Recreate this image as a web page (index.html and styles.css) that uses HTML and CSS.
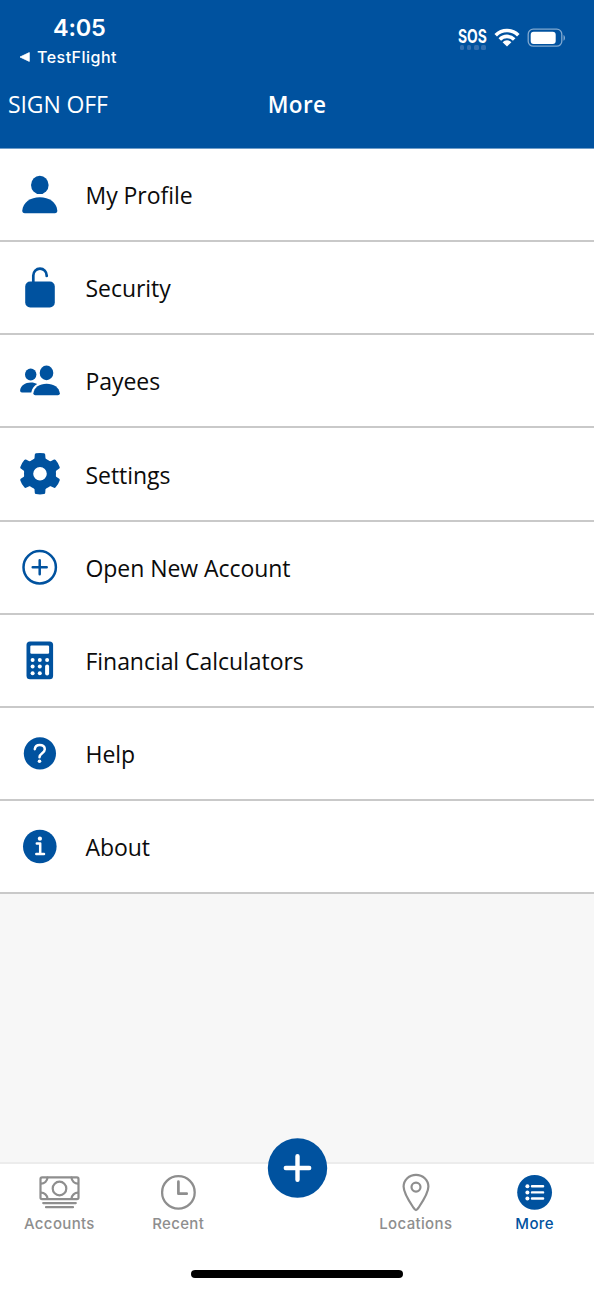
FILE: index.html
```
<!DOCTYPE html>
<html lang="en">
<head>
<meta charset="utf-8">
<title>More</title>
<link rel="stylesheet" href="styles.css">
</head>
<body>
<div class="screen">
  <header class="header">
    <div class="status">
      <div class="status-left">
        <div class="clock">4:05</div>
        <div class="back"><svg class="back-arrow" viewBox="0 0 11 10"><path d="M1 5 10.3.6v8.8z" fill="#fff" stroke="#fff" stroke-width=".8" stroke-linejoin="round"/></svg><span>TestFlight</span></div>
      </div>
      <div class="status-right">
        <div class="sos"><span class="sos-text">SOS</span><span class="dots"><i></i><i></i><i></i><i></i></span></div>
        <svg class="wifi" viewBox="0 0 26 20"><g fill="none" stroke="#fff" stroke-width="3.6"><path d="M1.7 8.2a16 16 0 0 1 22.6 0"/><path d="M5.8 12.4a10.2 10.2 0 0 1 14.4 0"/></g><path d="M8.6 15.2a6.2 6.2 0 0 1 8.8 0L13 19.6z" fill="#fff"/></svg>
        <svg class="battery" viewBox="0 0 39 20"><rect x="1.2" y="1.2" width="33.6" height="17" rx="5" fill="none" stroke="#80a9d1" stroke-width="1.3"/><rect x="3.700" y="3.700" width="25" height="12.2" rx="3" fill="#fff"/><path d="M36.500 7c2 .8 2 5 0 5.8z" fill="#80a9d1"/></svg>
      </div>
    </div>
    <div class="nav"><span class="sign-off">SIGN OFF</span><h1 class="title">More</h1><span></span></div>
  </header>
  <main class="menu">
    <div class="row"><svg class="icon" viewBox="0 0 80 93"><ellipse cx="39.8" cy="36.9" rx="8.8" ry="9.2"/><path d="M24.8 65.2q-2.6 0-2.5-2.6C23 54 30.5 49.2 39.8 49.2S56.600 54 57.300 62.600q.1 2.600-2.500 2.600z"/></svg><span class="label">My Profile</span></div>
    <div class="row"><svg class="icon" viewBox="0 0 80 93"><rect x="25.200" y="40.500" width="29.600" height="26" rx="5"/><path class="line" stroke-width="2.700" d="M33.300 42v-7.400a6.700 7 0 0 1 13.400 0v.4"/></svg><span class="label">Security</span></div>
    <div class="row"><svg class="icon" viewBox="0 0 80 93"><ellipse cx="30.700" cy="40.400" rx="5.700" ry="6"/><ellipse cx="46.500" cy="38.900" rx="6.800" ry="7.300"/><path d="M22 58.500q-2 0-1.900-1.900c.5-5.200 5-8.200 10.800-8.200 2.700 0 4.700.6 6.300 1.700-3.100 1.900-5.300 4.700-5.900 8.400z"/><path d="M35.300 61.200q-2 0-1.900-2c.7-5.700 6-9.500 13.200-9.500s12.500 3.800 13.200 9.500q.1 2-1.900 2z"/></svg><span class="label">Payees</span></div>
    <div class="row"><svg class="icon" viewBox="0 0 80 93"><g transform="translate(40 46.700)"><circle r="11.400" fill="none" stroke="#00529f" stroke-width="9.200"/><path id="tooth" d="M-6.800-13-5.500-15.500-5.200-19.200q.1-1 1.200-1.200Q0-21.200 4-20.400 5.100-20.200 5.200-19.200L5.500-15.500 6.800-13z"/><use href="#tooth" transform="rotate(60)"/><use href="#tooth" transform="rotate(120)"/><use href="#tooth" transform="rotate(180)"/><use href="#tooth" transform="rotate(240)"/><use href="#tooth" transform="rotate(300)"/></g></svg><span class="label">Settings</span></div>
    <div class="row"><svg class="icon" viewBox="0 0 80 93"><circle class="line" cx="39.700" cy="46.300" r="16.200" stroke-width="2.500"/><path class="line" stroke-width="2.500" d="M32.700 46.300h14M39.700 39.300v14"/></svg><span class="label">Open New Account</span></div>
    <div class="row"><svg class="icon" viewBox="0 0 80 93"><rect x="26.500" y="27.600" width="26.600" height="37.700" rx="3.500"/><g fill="#fff"><rect x="30.300" y="31.500" width="18.800" height="8.200" rx="1.200"/><circle cx="32.600" cy="46" r="2"/><circle cx="39.800" cy="46" r="2"/><circle cx="47.100" cy="46" r="2"/><circle cx="32.600" cy="52.600" r="2"/><circle cx="39.800" cy="52.600" r="2"/><circle cx="32.600" cy="59.200" r="2"/><circle cx="39.800" cy="59.200" r="2"/><rect x="45.100" y="50.600" width="4" height="10.800" rx="2"/></g></svg><span class="label">Financial Calculators</span></div>
    <div class="row"><svg class="icon" viewBox="0 0 80 93"><circle cx="39.900" cy="46.400" r="16.100"/><path class="mark" d="M34.800 42.200c.3-2.700 2.300-4.300 4.900-4.300 3 0 5.100 1.700 5.100 4.300 0 4-5.300 4-5.300 8"/><circle cx="39.500" cy="54.300" r="1.800" fill="#fff"/></svg><span class="label">Help</span></div>
    <div class="row"><svg class="icon" viewBox="0 0 80 93"><circle cx="39.800" cy="46.500" r="16.800"/><path class="mark" d="M36.800 43.500h3.400v10.300M36.300 54h7.700"/><circle cx="39.900" cy="38.700" r="2.100" fill="#fff"/></svg><span class="label">About</span></div>
  </main>
  <footer class="footer">
    <nav class="tabs">
      <div class="tab"><svg class="tab-icon" viewBox="0 0 42 42"><g class="gray" stroke-width="2.200"><rect x="2.500" y="5.400" width="38" height="21.700" rx="1.600"/><circle cx="21.500" cy="16.500" r="6.800"/><path d="M9.500 5.700a6.500 6.500 0 0 1-6.500 6M33.500 5.700a6.500 6.500 0 0 0 6.500 6M9.500 26.700a6.500 6.500 0 0 0-6.500-6M33.500 26.700a6.500 6.500 0 0 1 6.500-6M5.200 31.100h32.600M8 35.200h27"/></g></svg><span>Accounts</span></div>
      <div class="tab"><svg class="tab-icon" viewBox="0 0 42 42"><g class="gray" stroke-width="2.300"><circle cx="21.400" cy="20.400" r="16.300"/><path stroke-width="2.700" d="M21.400 9.700v12h8.300"/></g></svg><span>Recent</span></div>
      <div class="tab"><svg class="add" viewBox="0 0 60 60"><circle cx="30.500" cy="30" r="29.700"/><path d="M18.800 30h23.400M30.500 18.300v23.400" stroke="#fff" stroke-width="4.400" stroke-linecap="round"/></svg></div>
      <div class="tab"><svg class="tab-icon" viewBox="0 0 42 42"><g class="gray" stroke-width="2.200"><path d="M21 38.100c-1.200 0-2-1.500-3-3.100C14 29.100 8.600 20.400 8.600 14.600a12.400 11.800 0 0 1 24.800 0c0 5.800-5.400 14.500-9.400 20.400-1 1.600-1.800 3.100-3 3.100z"/><circle cx="21" cy="15.100" r="4.500"/></g></svg><span>Locations</span></div>
      <div class="tab active"><svg class="tab-icon" viewBox="0 0 42 42"><circle cx="20.600" cy="20.400" r="17.400"/><g fill="none" stroke="#fff" stroke-width="2.400" stroke-linecap="round"><path d="M18 14.300h11.100M18 20.400h11.100M18 26.500h11.100"/></g><g fill="#fff"><circle cx="13.400" cy="14.300" r="2"/><circle cx="13.400" cy="20.400" r="2"/><circle cx="13.400" cy="26.500" r="2"/></g></svg><span>More</span></div>
    </nav>
    <div class="home-bar"></div>
  </footer>
</div>
</body>
</html>
```
FILE: styles.css
```
* { box-sizing: border-box; }
body { margin: 0; font-family: "Open Sans", sans-serif; color: #0b0b0b; }
svg { display: block; fill: #00529f; }
.screen { width: 594px; height: 1290px; display: flex; flex-direction: column; background: #f7f7f7; overflow: hidden; }
.header { height: 149px; background: #00529f; border-bottom: 1px solid #6f9dc9; color: #fff; flex: none; }
.status { height: 76px; display: flex; justify-content: space-between; font-family: Inter, sans-serif; }
.status-left { padding: 13px 0 0 19px; }
.clock { font-size: 23.500px; font-weight: 600; line-height: 29px; padding-left: 34px; letter-spacing: -.2px; }
.back { display: flex; align-items: center; gap: 7px; height: 30px; font-size: 16px; font-weight: 500; letter-spacing: .48px; }
.back-arrow { width: 11px; height: 10px; }
.status-right { display: flex; padding: 27px 28px 0 0; }
.sos { width: 28px; height: 24px; margin-right: 8px; }
.sos-text { display: block; width: 37px; font-size: 18.500px; line-height: 18px; font-weight: 700; transform: scaleX(.75); transform-origin: 0 0; }
.dots { display: flex; gap: 2.500px; padding-left: 1.800px; }
.dots i { flex: none; width: 4.600px; height: 4.600px; border-radius: 1.500px; background: #336fb0; }
.wifi { width: 26px; height: 20px; margin-right: 7px; }
.battery { width: 39px; height: 20px; margin-top: 1px; }
.nav { display: grid; grid-template-columns: 1fr auto 1fr; align-items: center; height: 56px; padding: 0 8px; }
.sign-off { font-size: 23px; font-weight: 400; letter-spacing: -.1px; padding-bottom: 1px; }
.title { margin: 0; font-size: 22.500px; font-weight: 600; letter-spacing: .3px; }
.menu { flex: 1; }
.row { height: 93.160px; background: #fff; border-bottom: 2px solid #c9c9c9; display: flex; align-items: center; }
.icon { width: 80px; height: 93px; flex: none; align-self: flex-start; margin-top: -1px; }
.label { padding-left: 5.500px; font-size: 23px; letter-spacing: -.05px; line-height: 30px; padding-top: 1px; }
.line { fill: none; stroke: #00529f; stroke-linecap: round; }
.mark { fill: none; stroke: #fff; stroke-width: 2.500px; stroke-linecap: round; stroke-linejoin: round; }
.footer { height: 128px; background: #fff; border-top: 2px solid #ececec; flex: none; }
.tabs { display: grid; grid-template-columns: repeat(5, 1fr); height: 104px; }
.tab { display: flex; flex-direction: column; align-items: center; padding-top: 8px; font: 500 15px/20px Inter, sans-serif; letter-spacing: .35px; color: #8e8e8e; }
.tab-icon { width: 42px; height: 42px; }
.gray { fill: none; stroke: #8e8e8e; stroke-linecap: round; stroke-linejoin: round; }
.add { width: 60px; height: 60px; margin-top: -34px; flex: none; overflow: visible; }
.active { color: #00529f; }
.home-bar { width: 212px; height: 8px; border-radius: 4px; margin: 1.500px auto 0; background: #000; }
```
